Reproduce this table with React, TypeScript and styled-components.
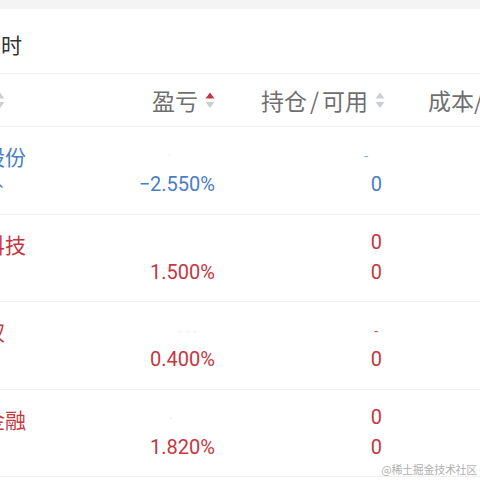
import React from 'react';
import styled, { createGlobalStyle } from 'styled-components';

const RED = '#c5373f';
const BLUE = '#4a7ec4';

const Global = createGlobalStyle`
  html, body { margin: 0; padding: 0; background: #fff; }
  body {
    width: 480px; height: 480px; overflow: hidden;
    font-family: Roboto, "Noto Sans CJK SC", sans-serif;
    -webkit-font-smoothing: antialiased;
  }
`;

const Viewport = styled.div`
  position: relative;
  width: 480px;
  height: 480px;
  overflow: hidden;
  background: #fff;
`;

const Sheet = styled.div`
  margin-left: -60px;
  width: 640px;
`;

const TopGap = styled.div`
  height: 9px;
  background: #f4f4f4;
`;

const TitleBar = styled.div`
  box-sizing: border-box;
  height: 65px;
  display: flex;
  align-items: center;
  padding: 6px 0 0 40px;
  border-bottom: 1px solid #efefef;
  font-family: "Noto Sans CJK SC", sans-serif;
  font-size: 21px;
  color: #333;
`;

const cols = '160px 115px 167px 1fr';

const HeaderRow = styled.div`
  box-sizing: border-box;
  height: 53px;
  display: grid;
  grid-template-columns: ${cols};
  border-bottom: 1px solid #efefef;
`;

const HeaderCell = styled.div<{ $align: 'start' | 'end'; $pl?: number; $shift?: number }>`
  display: flex;
  align-items: center;
  justify-content: ${p => (p.$align === 'end' ? 'flex-end' : 'flex-start')};
  gap: 7px;
  padding-left: ${p => p.$pl ?? 0}px;
  margin-right: ${p => -(p.$shift ?? 0)}px;
  font-family: "Noto Sans CJK SC", sans-serif;
  font-size: 23px;
  color: #6f6f6f;
  white-space: nowrap;
`;

const Slash = styled.span`
  margin: 0 3px;
`;

const Row = styled.div`
  box-sizing: border-box;
  height: 87.5px;
  display: grid;
  grid-template-columns: ${cols};
  border-bottom: 1px solid #efefef;
`;

const NameCell = styled.div<{ $color: string }>`
  display: flex;
  flex-direction: column;
  align-items: flex-start;
  padding: 14px 0 0 2px;
  color: ${p => p.$color};
  font-family: "Noto Sans CJK SC", sans-serif;
  white-space: nowrap;
`;

const NameMain = styled.div`
  font-size: 21px;
  line-height: 30px;
  height: 30px;
`;

const NameSub = styled.div`
  margin-top: 3px;
  font-size: 14px;
  line-height: 14px;
`;

const ValueCell = styled.div<{ $color: string }>`
  display: flex;
  flex-direction: column;
  align-items: flex-end;
  padding-top: 12px;
  color: ${p => p.$color};
  font-family: Roboto, sans-serif;
  font-size: 20px;
`;

const Line = styled.div`
  height: 30px;
  line-height: 30px;
`;

const Faint = styled.span<{ $mr: number; $op: number }>`
  display: inline-block;
  margin-right: ${p => p.$mr}px;
  opacity: ${p => p.$op};
  font-size: 14px;
`;

const Watermark = styled.div`
  position: absolute;
  right: 3px;
  bottom: 3px;
  font-family: "Noto Sans CJK SC", sans-serif;
  font-size: 11px;
  color: #b0b0b0;
  letter-spacing: -0.3px;
`;

const SortIcon = ({ up }: { up?: boolean }) => (
  <svg width="10" height="17" viewBox="0 0 10 17">
    <polygon points="0.5,6.5 5,0.5 9.5,6.5" fill={up ? RED : '#cbcfd5'} />
    <polygon points="0.5,10 9.5,10 5,16" fill="#cbcfd5" />
  </svg>
);

type Item = {
  name: string;
  sub?: string;
  color: string;
  pnlTop?: { mr: number; op: number; text: string };
  pnl: string;
  posTop: React.ReactNode;
  pos: string;
};

const items: Item[] = [
  {
    name: '华金股份', sub: '一二三四、', color: BLUE,
    pnlTop: { mr: 44, op: 0.15, text: '·' }, pnl: '−2.550%',
    posTop: <Faint $mr={14} $op={0.7}>-</Faint>, pos: '0',
  },
  { name: '智能科技', color: RED, pnl: '1.500%', posTop: '0', pos: '0' },
  {
    name: '中证权', color: RED,
    pnlTop: { mr: 18, op: 0.12, text: '- - -' }, pnl: '0.400%',
    posTop: <Faint $mr={4} $op={0.9}>-</Faint>, pos: '0',
  },
  {
    name: '数字金融', color: RED,
    pnlTop: { mr: 42, op: 0.15, text: '·' }, pnl: '1.820%',
    posTop: '0', pos: '0',
  },
];

export default function App() {
  return (
    <Viewport>
      <Global />
      <Sheet>
        <TopGap />
        <TitleBar>实时</TitleBar>
        <HeaderRow>
          <HeaderCell $align="start" $pl={2}>
            名称 <SortIcon />
          </HeaderCell>
          <HeaderCell $align="end">
            盈亏 <SortIcon up />
          </HeaderCell>
          <HeaderCell $align="end" $shift={3}>
            <span>持仓<Slash>/</Slash>可用</span> <SortIcon />
          </HeaderCell>
          <HeaderCell $align="start" $pl={46}>
            成本/现价
          </HeaderCell>
        </HeaderRow>
        {items.map((it, i) => (
          <Row key={i}>
            <NameCell $color={it.color}>
              <NameMain>{it.name}</NameMain>
              {it.sub && <NameSub>{it.sub}</NameSub>}
            </NameCell>
            <ValueCell $color={it.color}>
              <Line>
                {it.pnlTop && (
                  <Faint $mr={it.pnlTop.mr} $op={it.pnlTop.op}>{it.pnlTop.text}</Faint>
                )}
              </Line>
              <Line>{it.pnl}</Line>
            </ValueCell>
            <ValueCell $color={it.color}>
              <Line>{it.posTop}</Line>
              <Line>{it.pos}</Line>
            </ValueCell>
            <div />
          </Row>
        ))}
      </Sheet>
      <Watermark>@稀土掘金技术社区</Watermark>
    </Viewport>
  );
}
